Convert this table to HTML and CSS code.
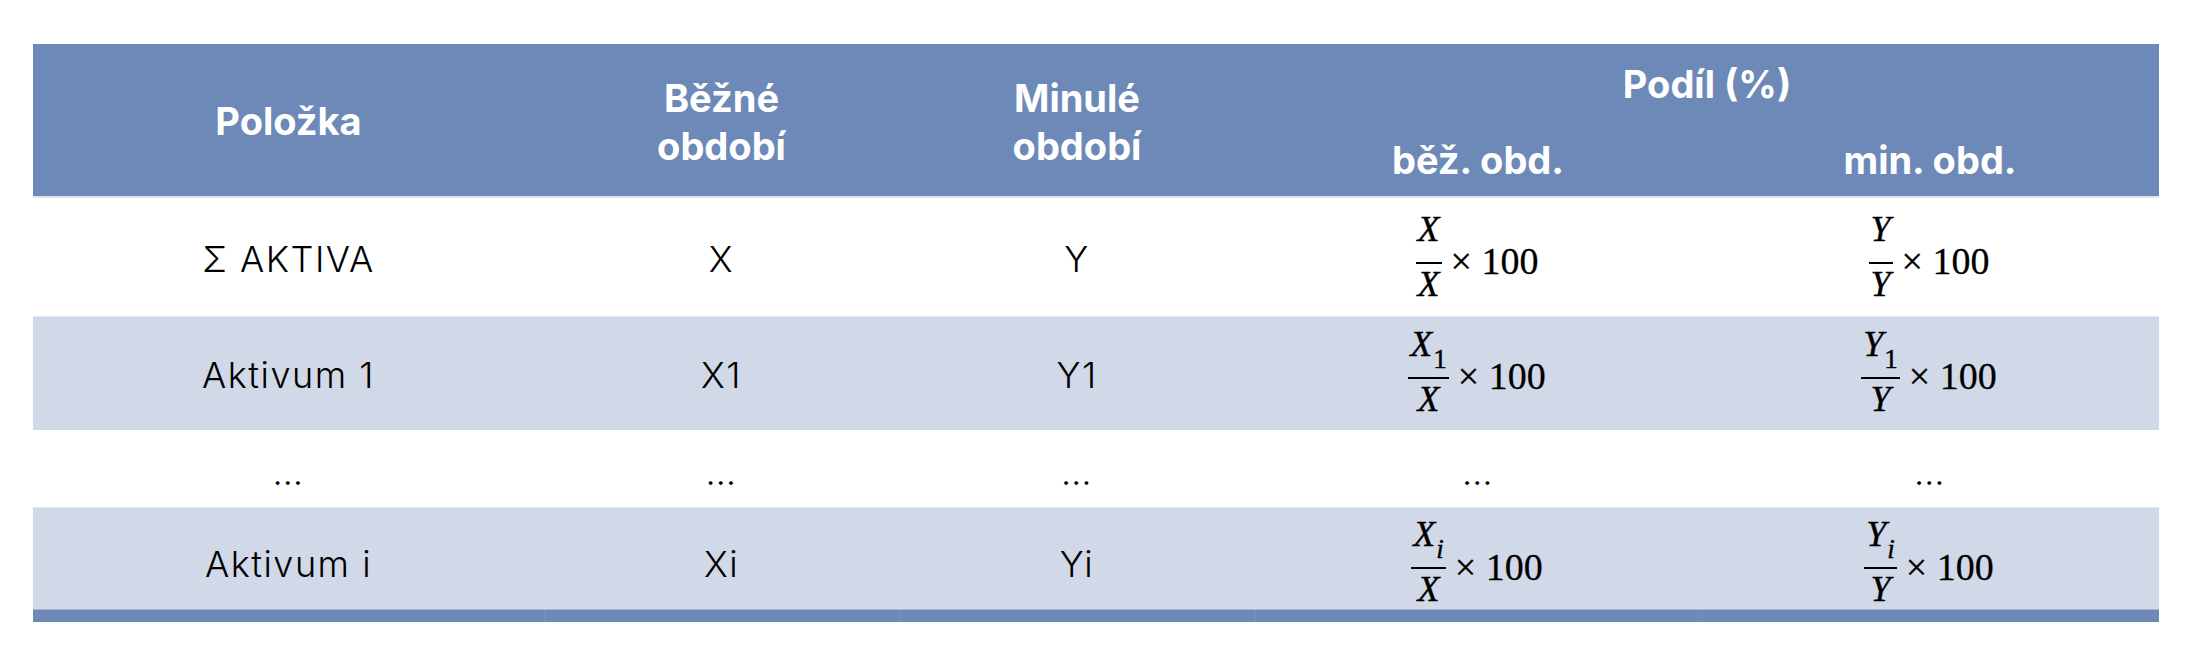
FILE: index.html
```html
<!DOCTYPE html>
<html lang="cs">
<head>
<meta charset="utf-8">
<title>Podíl aktiv</title>
<link rel="stylesheet" href="styles.css">
</head>
<body>
<table class="tbl">
  <colgroup>
    <col class="c1"><col class="c2"><col class="c3"><col class="c4"><col class="c5">
  </colgroup>
  <thead>
    <tr class="hr1">
      <th rowspan="2" class="hb">Položka</th>
      <th rowspan="2" class="hb two">Běžné<br>období</th>
      <th rowspan="2" class="hb two">Minulé<br>období</th>
      <th colspan="2" class="podil">Podíl (%)</th>
    </tr>
    <tr class="hr2">
      <th class="hb">běž. obd.</th>
      <th class="hb">min. obd.</th>
    </tr>
  </thead>
  <tbody>
    <tr class="r1">
      <td>Σ AKTIVA</td>
      <td>X</td>
      <td>Y</td>
      <td class="fcell"><span class="formula"><span class="frac"><span class="num">X</span><span class="bar"></span><span class="den">X</span></span><span class="times">× 100</span></span></td>
      <td class="fcell"><span class="formula"><span class="frac"><span class="num">Y</span><span class="bar"></span><span class="den">Y</span></span><span class="times">× 100</span></span></td>
    </tr>
    <tr class="r2">
      <td>Aktivum 1</td>
      <td>X1</td>
      <td>Y1</td>
      <td class="fcell"><span class="formula"><span class="frac"><span class="num">X<span class="sub">1</span></span><span class="bar"></span><span class="den">X</span></span><span class="times">× 100</span></span></td>
      <td class="fcell"><span class="formula"><span class="frac"><span class="num">Y<span class="sub">1</span></span><span class="bar"></span><span class="den">Y</span></span><span class="times">× 100</span></span></td>
    </tr>
    <tr class="r3">
      <td>…</td>
      <td>…</td>
      <td>…</td>
      <td>…</td>
      <td>…</td>
    </tr>
    <tr class="r4">
      <td>Aktivum i</td>
      <td>Xi</td>
      <td>Yi</td>
      <td class="fcell"><span class="formula"><span class="frac"><span class="num">X<span class="sub it">i</span></span><span class="bar"></span><span class="den">X</span></span><span class="times">× 100</span></span></td>
      <td class="fcell"><span class="formula"><span class="frac"><span class="num">Y<span class="sub it">i</span></span><span class="bar"></span><span class="den">Y</span></span><span class="times">× 100</span></span></td>
    </tr>
  </tbody>
  <tfoot>
    <tr class="foot">
      <td></td><td></td><td></td><td></td><td></td>
    </tr>
  </tfoot>
</table>
</body>
</html>
```

FILE: styles.css
```css
* {
  box-sizing: border-box;
}

body {
  margin: 0;
  background: #ffffff;
}

.tbl {
  margin: 44px 0 0 33px;
  width: 2126px;
  border-collapse: collapse;
  border-spacing: 0;
  table-layout: fixed;
}

.c1 { width: 511px; }
.c2 { width: 355px; }
.c3 { width: 356px; }
.c4 { width: 446px; }
.c5 { width: 458px; }

th,
td {
  padding: 0;
  text-align: center;
  vertical-align: middle;
}

thead th {
  background: #6d89b8;
  color: #ffffff;
  font-family: Inter, "Noto Sans", sans-serif;
  font-weight: 700;
  font-size: 38px;
  line-height: 48px;
}

.hr1,
.hr2 {
  height: 77px;
}

.two {
  padding-top: 2px;
}

.podil {
  padding-top: 3px;
}

.hb {
  box-shadow: inset 0 -2px 0 #dde2ec;
}

tbody td {
  font-family: Inter, "Noto Sans", sans-serif;
  font-weight: 300;
  font-size: 36px;
  letter-spacing: 1.5px;
  color: #000000;
  padding-top: 4px;
}

.r1 { height: 118px; background: #ffffff; }
.r2 { height: 114px; background: #d1d8e8; }
.r3 { height: 77px; background: #ffffff; }
.r4 { height: 102px; background: #d1d8e8; }

.r2 td {
  box-shadow: inset 0 1px 0 #e4e8f1;
}

.r3 td {
  padding-top: 6px;
}

.r4 td {
  padding-top: 12px;
  box-shadow: inset 0 1px 0 #e4e8f1;
}

.r1 .fcell {
  padding-top: 0;
  padding-bottom: 7px;
}

.r2 .fcell {
  padding-top: 0;
  padding-bottom: 9px;
}

.r4 .fcell {
  padding-top: 2px;
  padding-bottom: 0;
}

.foot {
  height: 13px;
}

.foot td {
  height: 13px;
  background: #6d89b8;
  box-shadow: inset 0 1px 0 #a6b4d0;
}

.foot td + td {
  box-shadow: inset 0 1px 0 #a6b4d0, inset 1px 0 0 #7891be;
}

.formula {
  display: inline-flex;
  align-items: center;
  font-family: "Liberation Serif", "DejaVu Serif", serif;
  font-weight: 400;
  letter-spacing: 0;
  color: #000000;
}

.frac {
  display: inline-flex;
  flex-direction: column;
  align-items: center;
  margin-right: 11px;
}

.num,
.den {
  font-style: italic;
  font-size: 36px;
  line-height: 1;
  -webkit-text-stroke: 0.4px #000000;
}

.num {
  margin-bottom: 15px;
}

.bar {
  align-self: stretch;
  height: 2px;
  margin: 0 -2px;
  background: #000000;
}

.den {
  margin-top: 2px;
}

.sub {
  font-style: normal;
  font-size: 27px;
  line-height: 0;
  vertical-align: -12px;
  margin-left: 1px;
}

.sub.it {
  font-style: italic;
}

.times {
  font-size: 38px;
  line-height: 1;
  margin-top: 10px;
  white-space: nowrap;
  -webkit-text-stroke: 0.3px #000000;
}
```
